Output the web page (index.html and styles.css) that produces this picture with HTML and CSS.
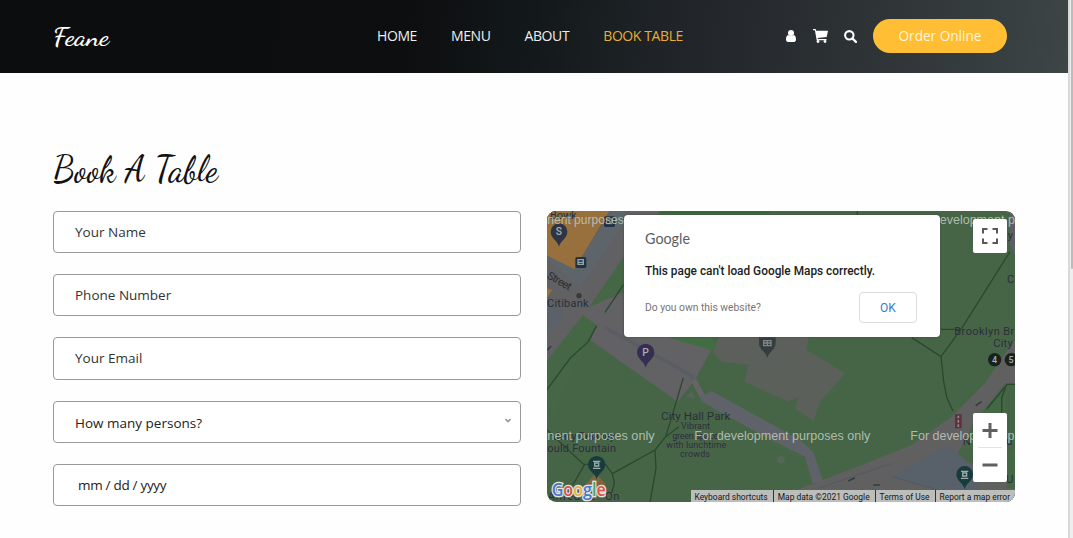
FILE: index.html
```
<!DOCTYPE html>
<html lang="en">
<head>
<meta charset="utf-8">
<title>Feane</title>
<link rel="stylesheet" href="styles.css">
</head>
<body>
<div class="page">
  <header class="header">
    <a class="brand"><svg width="60" height="34"><text x="0" y="26" textLength="56" lengthAdjust="spacingAndGlyphs">Feane</text></svg></a>
    <nav class="nav">
      <a>HOME</a><a>MENU</a><a>ABOUT</a><a class="active">BOOK TABLE</a>
    </nav>
    <div class="options">
      <svg class="user" width="10" height="12" viewBox="0 0 10 12"><circle cx="5" cy="3.1" r="3"/><path d="M2.2 5C.7 5.300 0 7 0 9.2 0 11 .8 12 2 12h6c1.200 0 2-1 2-2.800C10 7 9.300 5.300 7.800 5 6.500 6.300 3.500 6.300 2.200 5z"/></svg>
      <svg class="cart" width="15" height="14" viewBox="0 0 15 14"><path d="M0 0h2.700l.5 1.800H15L13.700 8 4.700 9l.2 1H13.500v1.200H3.700L1.900 1.200H0z"/><circle cx="5" cy="12.500" r="1.400"/><circle cx="12" cy="12.500" r="1.400"/></svg>
      <svg class="search" width="13" height="13" viewBox="0 0 13 13"><circle cx="5.300" cy="5.300" r="4.200" fill="none" stroke="#fff" stroke-width="2.100"/><path d="M8.500 8.500l3.400 3.400" stroke="#fff" stroke-width="2.300" stroke-linecap="round"/></svg>
      <a class="order">Order Online</a>
    </div>
  </header>
  <main class="booking">
    <h1 class="title"><svg width="180" height="56"><text x="0" y="40" textLength="165" lengthAdjust="spacingAndGlyphs">Book A Table</text></svg></h1>
    <div class="columns">
      <form class="form">
        <div class="field">Your Name</div>
        <div class="field">Phone Number</div>
        <div class="field">Your Email</div>
        <div class="field select"><span>How many persons?</span><svg width="6" height="5" viewBox="0 0 6 5"><path d="M.5 1L3 3.500 5.500 1" fill="none" stroke="#999" stroke-width="1.600"/></svg></div>
        <div class="field date">mm / dd / yyyy</div>
      </form>
      <div class="map">
        <svg class="tiles" viewBox="6 18 1404 873" preserveAspectRatio="none">
          <rect x="3" y="18" width="1407" height="873" fill="#466546"/>
          <!-- streets and blocks, upper left -->
          <path d="M3 18H345L236 155 138 300 3 510z" fill="#616163"/>
          <path d="M200 18H240V50L105 248 3 160V120L95 185z" fill="#5d646a"/>
          <path d="M3 18H193L88 192 3 150z" fill="#97703d"/>
          <path d="M3 248l18 8-18 26z" fill="#97703d"/>
          <path d="M3 278L60 330 3 400z" fill="#5b6168"/>
          <path d="M236 155V290L130 400 20 640 3 560V470L110 335 138 300z" fill="#456745"/>
          <path d="M135 305L236 262V395L420 395 498 435 450 525 398 590 135 405 155 360 105 325z" fill="#626163"/>
          <path d="M365 396H500L515 430 498 435z" fill="#426d43"/>
          <path d="M178 366l260 145 10 16" fill="none" stroke="#5b5d64" stroke-width="11"/>
          <!-- buildings and walks -->
          <path d="M520 395H790L785 435 900 505 825 590 805 648 750 610 760 575 730 590 598 530 610 480 530 470 505 445z" fill="#5c605b"/>
          <path d="M446 525l26 48" stroke="#666467" stroke-width="17"/>
          <path d="M465 575L500 558 765 705 805 740 835 832 803 835 780 755 650 690 470 590z" fill="#5f6268"/>
          <path d="M425 575l15-18 10 22z" fill="#57645d"/>
          <circle cx="708" cy="764" r="11" fill="#566655"/>
          <!-- diagonal avenue -->
          <path d="M755 891V855L950 780 1100 720 1220 635 1320 535 1370 460 1410 405V535H1380L1290 650 1230 760 1410 820V891z" fill="#606061"/>
          <path d="M1040 815L1210 720 1300 800V855H1180z" fill="#586069"/>
          <path d="M1395 18h15V150l-15-30z" fill="#5c6066"/>
          <path d="M1040 815l140 40M820 850l220-75" stroke="#565861" stroke-width="3"/>
          <path d="M1275 665l105-125v100zM1385 740h25v110h-25z" fill="#426844"/>
          <!-- footpaths -->
          <g fill="none" stroke="#2b482f" stroke-width="4">
            <path d="M236 238L180 322M155 362L130 410 75 460 3 558"/>
            <path d="M415 518L388 610 362 695 330 735 202 806M362 695l40-30M330 735L333 790 315 891M202 806l6 28-8 30M202 806l-22-30M3 672l115 108-35 60M118 778h18"/>
            <path d="M1395 140L1250 370 1188 455 1100 398M1188 373h60M1188 455l8 75 10 50 18 38M1410 538h-25l-15 40v45M1325 612l60-72M937 18v12"/>
          </g>
          <path d="M345 22H675" stroke="#346a39" stroke-width="7"/>
          <path d="M910 828l20-10M985 840h20M1292 602l18-12M8 435l10-12" stroke="#333b3d" stroke-width="5"/>
          <!-- labels -->
          <g class="labels">
            <text x="15" y="41" textLength="80">Bowk</text>
            <text transform="translate(4 218) rotate(30)" textLength="78">Street</text>
            <text x="6" y="306" textLength="125">Citibank</text>
            <text class="park" x="348" y="644" textLength="208">City Hall Park</text>
            <g class="note"><text x="408" y="673" textLength="87">Vibrant</text><text x="382" y="702" textLength="138">green space</text><text x="364" y="729" textLength="180">with lunchtime</text><text x="405" y="756" textLength="90">crowds</text></g>
            <text x="25" y="705" textLength="185">Jerry Delaney</text>
            <text x="7" y="741" textLength="206">ould Fountain</text>
            <text x="8" y="886" textLength="215">Alfred St - On</text>
            <text x="1228" y="390" textLength="180">Brooklyn Br</text>
            <text x="1345" y="426" textLength="58">City</text>
            <text x="1386" y="233">C</text><text x="1388" y="103">y</text>
            <text x="1253" y="720">N</text><text x="1384" y="720">u</text><text x="1384" y="834">U</text>
          </g>
          <!-- pins -->
          <path d="M42 125C38 106 17 100 17 80a25 25 0 0 1 50 0C67 100 46 106 42 125z" fill="#2d3444"/>
          <text class="pin" x="42" y="91">S</text>
          <path d="M302 488C298 469 276 463 276 442a26 26 0 0 1 52 0C328 463 306 469 302 488z" fill="#342f50"/>
          <text class="pin" x="302" y="454">P</text>
          <path d="M667 459C663 440 642 434 642 414V397H692V414C692 434 671 440 667 459z" fill="#353d3f"/>
          <path d="M656 407h22v15h-22zM667 407v15M656 414h22" fill="none" stroke="#7f8585" stroke-width="4"/>
          <path d="M120 840l32-35 30 32-16 20h-35z" fill="#80643d"/>
          <path d="M155 823C151 804 129 798 129 779a26 26 0 0 1 52 0C181 798 159 804 155 823z" fill="#183c3c"/>
          <path d="M144 769h22M149 774h12v9h-12zM144 790h22" fill="none" stroke="#9aaba8" stroke-width="4"/>
          <path d="M1259 853C1255 834 1234 828 1234 808a25 25 0 0 1 50 0C1284 828 1263 834 1259 853z" fill="#183c3c"/>
          <path d="M1248 799h22M1253 804h12v9h-12zM1248 820h22" fill="none" stroke="#9aaba8" stroke-width="4"/>
          <rect x="91" y="156" width="33" height="33" rx="5" fill="#203342"/><path d="M99 164h16v14H99zM99 172h16" fill="none" stroke="#94a0aa" stroke-width="4"/>
          <rect x="177" y="34" width="33" height="32" rx="5" fill="#203342"/><path d="M185 42h16v14h-16z" fill="none" stroke="#94a0aa" stroke-width="3"/>
          <circle cx="102" cy="272" r="8" fill="#383b34"/>
          <path d="M1230 628h20v42h-20z" fill="#59323b"/><path d="M1240 632v34" stroke="#a0848a" stroke-width="5" stroke-dasharray="8 5"/>
          <circle cx="1349" cy="464" r="20" fill="#17221c"/><circle cx="1399" cy="464" r="20" fill="#17221c"/>
          <text class="stop" x="1349" y="474">4</text><text class="stop" x="1398" y="474">5</text>
          <g class="watermark">
            <text x="7" y="57" textLength="229" lengthAdjust="spacingAndGlyphs">nent purposes</text><text x="1184" y="57" textLength="226" lengthAdjust="spacingAndGlyphs">evelopment p</text>
            <text x="7" y="706" textLength="322" lengthAdjust="spacingAndGlyphs">nent purposes only</text>
            <text x="448" y="706" textLength="528" lengthAdjust="spacingAndGlyphs">For development purposes only</text>
            <text x="1096" y="706" textLength="312" lengthAdjust="spacingAndGlyphs">For development p</text>
          </g>
          <text class="logo" x="20" y="873" textLength="162" lengthAdjust="spacingAndGlyphs"><tspan fill="#4978c8">G</tspan><tspan fill="#d95349">o</tspan><tspan fill="#e5b43e">o</tspan><tspan fill="#4978c8">g</tspan><tspan fill="#4ba362">l</tspan><tspan fill="#d95349">e</tspan></text>
        </svg>
        <div class="dialog">
          <svg class="google" width="46" height="20"><text x="0" y="14" textLength="45" lengthAdjust="spacingAndGlyphs">Google</text></svg>
          <p class="message">This page can't load Google Maps correctly.</p>
          <div class="actions"><span>Do you own this website?</span><button class="ok" type="button">OK</button></div>
        </div>
        <div class="control full"><svg width="16" height="16" viewBox="0 0 16 16"><path d="M1 5.500V1h4.500M10.500 1H15v4.500M15 10.500V15h-4.500M5.500 15H1v-4.500" fill="none" stroke="#595959" stroke-width="2"/></svg></div>
        <div class="control zoom"><svg width="34" height="69" viewBox="0 0 34 69"><path d="M9.500 17.500h15M17 10v15M9.500 52h15" stroke="#606060" stroke-width="3"/><path d="M5 34.500h24" stroke="#e4e4e4"/></svg></div>
        <div class="legal"><span>Keyboard shortcuts</span><span>Map data ©2021 Google</span><span>Terms of Use</span><span>Report a map error</span></div>
      </div>
    </div>
  </main>
</div>
<div class="scrollbar"><div class="thumb"></div></div>
</body>
</html>
```
FILE: styles.css
```
* { box-sizing: border-box; }
body { margin: 0; display: flex; height: 538px; overflow: hidden; background: #fefefe; font-family: "Open Sans", sans-serif; color: #222; }
.page { width: 1068px; flex: none; }
.scrollbar { width: 5px; height: 538px; background: #eee; border-left: 2px solid #d9d9d9; }
.thumb { height: 269px; margin-left: 1px; background: #bcbcbc; border-radius: 0 0 2px 2px; }
.header { height: 73px; padding: 0 61px 2px 53px; display: flex; align-items: center; color: #fff; background: linear-gradient(97deg, #0c0d0e 0, #0d0e0f 38%, #13191b 50%, #22262b 65%, #2e3336 81%, #3d4546 100%); }
.brand { width: 60px; height: 34px; }
.brand text { font: 600 26px "Dancing Script", "Liberation Serif", cursive; fill: #fff; }
.nav { display: flex; gap: 34px; margin-left: 264px; font-size: 14px; letter-spacing: -.4px; line-height: 20px; white-space: nowrap; color: #eee; }
.active { color: #e8ae35; }
.options { display: flex; align-items: center; margin-left: auto; fill: #fff; }
.cart { margin-left: 17px; }
.search { margin-left: 16px; margin-top: 2px; }
.order { width: 134px; height: 34px; margin-left: 16px; border-radius: 17px; background: #ffbe33; color: #fff5d8; font-size: 13.600px; line-height: 34px; text-align: center; }
.booking { padding: 68px 53px 0; }
.title { margin: 0; height: 70px; }
.title text { font: 500 36px "Dancing Script", "Liberation Serif", cursive; fill: #111; }
.columns { display: flex; gap: 26px; }
.form { width: 468px; flex: none; display: grid; grid-auto-rows: 42.200px; row-gap: 21px; align-content: start; }
.field { display: flex; align-items: center; padding: 0 21px; border: 1px solid #999; border-radius: 4px; background: #fff; font-size: 13.500px; color: #333; }
.select { justify-content: space-between; padding: 3px 9px 0 21px; color: #222; }
.select svg { margin-top: -6px; }
.date { padding-left: 24px; color: #222; letter-spacing: -.3px; }
.map { position: relative; width: 468px; height: 291px; overflow: hidden; border-radius: 9px; font-family: Roboto, sans-serif; }
.tiles { display: block; width: 468px; height: 291px; }
.labels { font: 33px Roboto, sans-serif; fill: #282e36; stroke: #66686a; stroke-width: 2px; stroke-opacity: .35; paint-order: stroke; }
.park { font-size: 35px; }
.note { font-size: 27px; }
.pin, .stop { font: 500 31px Roboto, sans-serif; fill: #a9adb5; text-anchor: middle; }
.stop { font-size: 27px; }
.watermark { font: 37px "Liberation Sans", sans-serif; fill: #bdc6bd; fill-opacity: .9; }
.logo { font: 600 56px "Open Sans", sans-serif; stroke: #e2e4e2; stroke-width: 8px; paint-order: stroke; }
.dialog { position: absolute; left: 77px; top: 4px; width: 316px; height: 122px; padding: 15px 23px 0 21px; background: #fff; border-radius: 4px; box-shadow: 0 0 2px #444; }
.google { display: block; }
.google text { font: 15.500px Lato, sans-serif; fill: #5d5d5d; }
.message { margin: 12px 0 0; font-size: 11.850px; line-height: 18px; font-weight: 500; color: #212121; white-space: nowrap; }
.actions { display: flex; align-items: center; justify-content: space-between; margin-top: 12px; color: #757575; font-size: 10.300px; }
.ok { width: 58px; height: 31px; padding: 0; border: 1px solid #dadce0; border-radius: 4px; background: #fff; color: #3c7bd0; font: 12px Roboto, sans-serif; }
.control { position: absolute; left: 426px; width: 34px; background: #fff; border-radius: 2px; }
.full { top: 8px; height: 34px; display: grid; place-items: center; }
.zoom { top: 202px; height: 69px; }
.legal { position: absolute; right: 0; bottom: 0; display: flex; height: 12px; font-size: 8.450px; line-height: 14px; color: #151515; background: #bcbebc; white-space: nowrap; }
.legal span { padding: 0 5px 0 4px; border-left: 1px solid #333; }
.legal span:first-child { border-left: 0; }
```
